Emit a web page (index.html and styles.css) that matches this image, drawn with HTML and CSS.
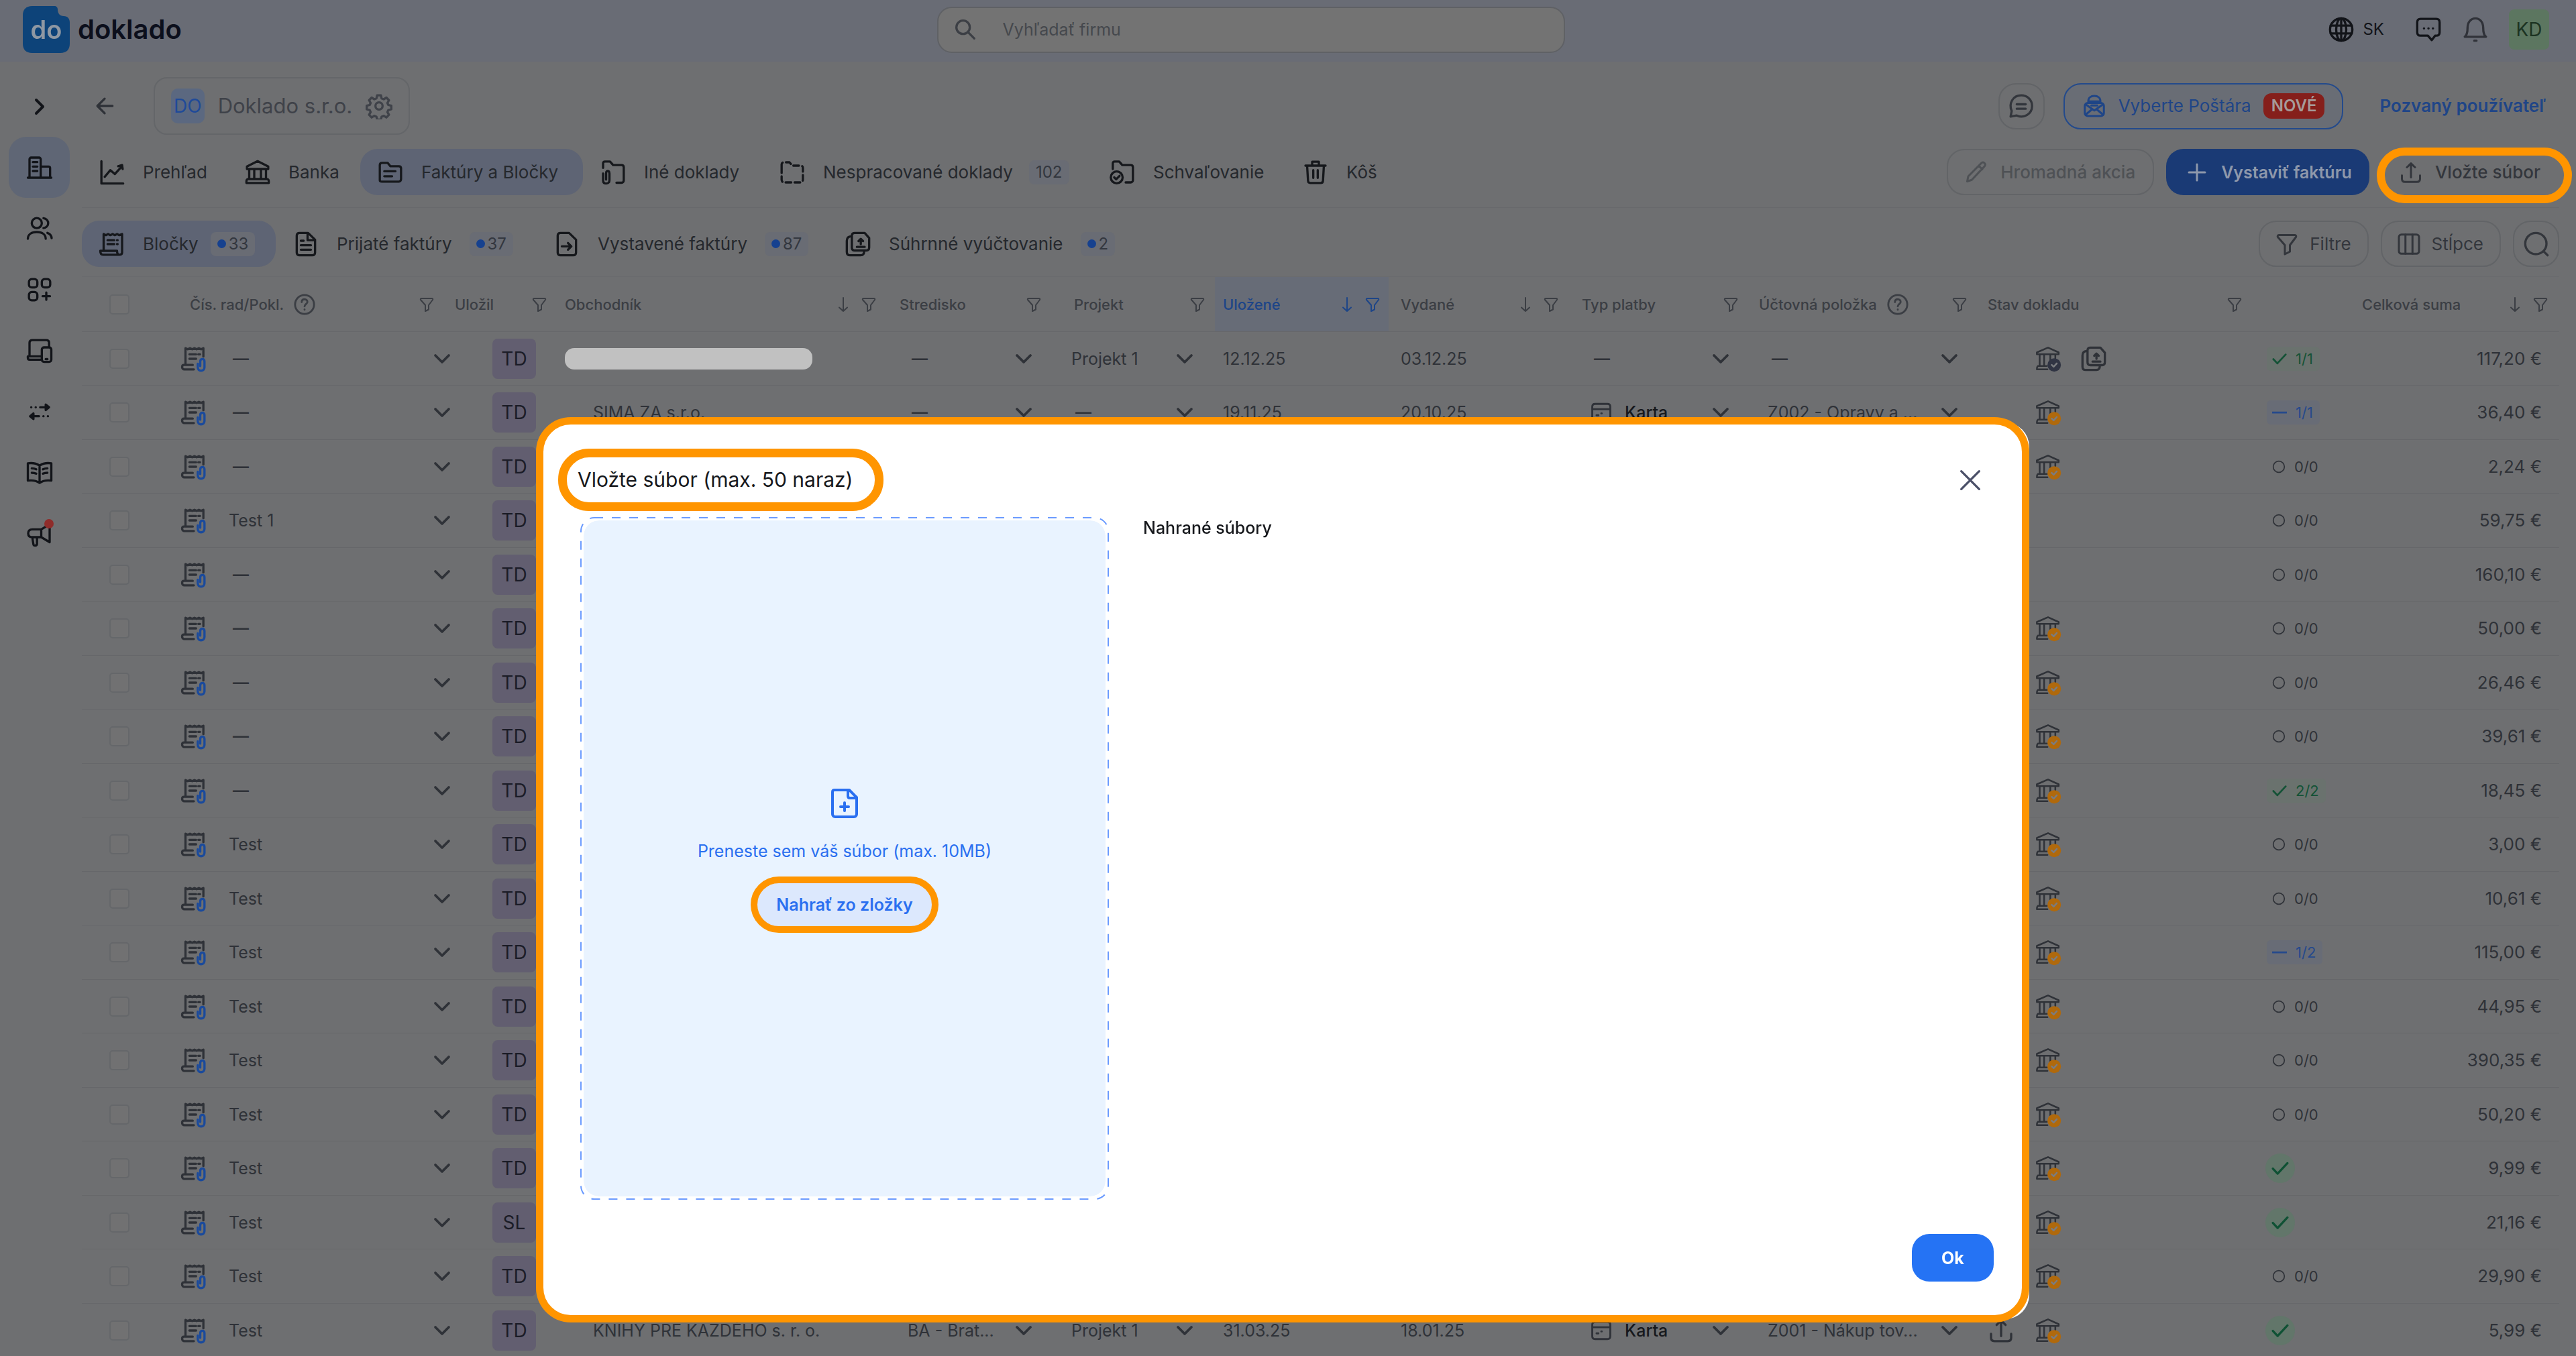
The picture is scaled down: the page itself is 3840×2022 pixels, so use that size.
FILE: index.html
```
<!DOCTYPE html>
<html lang="sk">

<head>
    <meta charset="utf-8">
    <title>Doklado - Bločky</title>
    <link rel="stylesheet" href="styles.css">
</head>

<body>
    <!-- icons -->
    <svg class="sprite" aria-hidden="true">
        <symbol id="chev-r" viewBox="0 0 24 24"><path d="M9.500 7l5 5-5 5"/></symbol>
        <symbol id="chev-d" viewBox="0 0 24 24"><path d="M4 8l8 8 8-8"/></symbol>
        <symbol id="back" viewBox="0 0 24 24"><path d="M19 12H6M12 5.500L5.500 12l6.500 6.500"/></symbol>
        <symbol id="gear" viewBox="0 0 24 24"><circle cx="12" cy="12" r="3.200"/><path d="M10.300 2.500h3.400l.6 2.700 1.900.8 2.400-1.500 2.300 2.400-1.400 2.400.8 1.800 2.700.7v3.200l-2.700.7-.8 1.800 1.400 2.400-2.300 2.400-2.400-1.500-1.900.8-.6 2.700h-3.400l-.6-2.700-1.900-.8-2.400 1.500-2.300-2.400 1.400-2.400-.8-1.800-2.700-.7v-3.200l2.700-.7.8-1.800-1.400-2.400 2.300-2.400 2.400 1.500 1.900-.8z"/></symbol>
        <symbol id="building" viewBox="0 0 24 24"><path d="M1.500 21h21M3 21V4.500C3 3.700 3.600 3 4.400 3h7.200c.8 0 1.400.7 1.400 1.500V21M13 11h7c.8 0 1.400.6 1.400 1.400V21M6 7h4M6 11h4M6 15h4"/></symbol>
        <symbol id="users" viewBox="0 0 24 24"><circle cx="9.500" cy="7" r="4.500"/><path d="M15.500 2.600c2.500.4 4.200 2.200 4.200 4.500s-1.700 4-4.200 4.400M1.500 21c0-4 3.500-6 8-6s8 2 8 6M19 15.800c2.300.8 3.700 2.500 3.800 4.700"/></symbol>
        <symbol id="apps" viewBox="0 0 24 24"><rect x="2.500" y="2.500" width="7.500" height="7.500" rx="2.500"/><rect x="14" y="2.500" width="7.500" height="7.500" rx="2.500"/><rect x="2.500" y="14" width="7.500" height="7.500" rx="2.500"/><path d="M18 14.500v6.500M14.700 17.800h6.600"/></symbol>
        <symbol id="devices" viewBox="0 0 24 24"><path d="M14 20H3c-1 0-1.500-.6-1.500-1.500V17H14M3 17V5c0-1.500.9-2.500 2.500-2.500h12.500c1.500 0 2.500 1 2.500 2.500v3"/><rect x="14" y="9" width="8.500" height="13" rx="2"/><path d="M17.500 19.500h1.500"/></symbol>
        <symbol id="swap" viewBox="0 0 24 24"><path d="M4.500 8h.1M8.500 8h.1M12.500 8h7M17.500 5.500L20.500 8l-3 2.500zM19.500 16h-.1M15.500 16h-.1M11.500 16h-7M6.500 13.500L3.500 16l3 2.500z"/></symbol>
        <symbol id="book" viewBox="0 0 24 24"><path d="M12 5.500C9 3.500 5 3 1.500 3.500v15.500c3.500-.5 7.500 0 10.500 2 3-2 7-2.500 10.500-2V3.500C19 3 15 3.500 12 5.500zM12 5.500V21M5 8c1.500 0 3 .3 4 .8M5 12c1.500 0 3 .3 4 .8M19 8c-1.500 0-3 .3-4 .8M19 12c-1.500 0-3 .3-4 .8"/></symbol>
        <symbol id="mega" viewBox="0 0 24 24"><path d="M13.500 8H5.500C3 8 1.800 9.500 1.800 11.500S3 15 5.500 15h8l7.500 4.500v-16zM13.500 8v7M5.500 15.500l1 6c.2.800.8 1 1.500 1 1.200 0 1.700-.6 1.700-1.500v-5.500"/></symbol>
        <symbol id="chart" viewBox="0 0 24 24"><path d="M2.500 2v20H22M5.500 16l5-6 4 3.500 6-6.500M17.500 6.500l3.500-1 .5 3.500"/></symbol>
        <symbol id="bank" viewBox="0 0 24 24"><path d="M2.500 9V6.800L12 2l9.500 4.800V9zM4.500 9v9M9 9v9M15 9v9M19.500 9v9M3.500 18h17M2 21.500h20V20c0-1-.6-2-1.500-2h-17C2.600 18 2 19 2 20z"/></symbol>
        <symbol id="folder" viewBox="0 0 24 24"><path d="M2.500 19V5.500C2.500 4.100 3.400 3.500 4.500 3.500h5L12 6.500h7.500c1.200 0 2 .8 2 2V18c0 1.300-.8 2.300-2 2.300h-15c-1.200 0-2-.5-2-1.300zM6.500 11h10M6.500 15.500h7"/></symbol>
        <symbol id="folder-clip" viewBox="0 0 24 24"><path d="M3 8V4c0-1 .6-1.700 1.700-1.700h4.500L12 5.500h7.500c1.200 0 2 .8 2 2V19c0 1.300-.8 2.300-2 2.300H15M3 13v6c0 2 1.200 3 2.800 3s2.900-1 2.900-3v-6c0-1.500-.8-2.200-1.700-2.200S5.700 11.500 5.700 13v5.500"/></symbol>
        <symbol id="folder-dash" viewBox="0 0 24 24"><path stroke-dasharray="5 3" d="M2.500 8V5c0-1.400.9-2 2-2h5L12 6h7.500c1.200 0 2 .8 2 2v10.500c0 1.300-.8 2.500-2 2.500h-15c-1.200 0-2-1.200-2-2.500z"/></symbol>
        <symbol id="folder-check" viewBox="0 0 24 24"><circle cx="7" cy="16.500" r="5.300"/><path d="M4.800 16.500l1.700 1.700 3-3M3.500 9V4c0-1 .6-1.700 1.700-1.700h4L12 5.500h7.500c1.200 0 2 .8 2 2V19c0 1-.8 2-2 2H15"/></symbol>
        <symbol id="trash" viewBox="0 0 24 24"><path d="M3 6h18M9 5.500V2.500h6v3M4.500 6l.8 13.500c.1 1.300.8 2 2 2h9.400c1.200 0 1.900-.7 2-2L19.500 6M10 10v7M14 10v7"/></symbol>
        <symbol id="receipt" viewBox="0 0 24 24"><path d="M4.500 18V3l2 1 2-1 2 1 2-1 2 1 2-1 2 1 2.500-1v16.500c0 1.300-1 2-2.500 2H4c-1.500 0-2.500-1-2.500-3.500h15c0 2.500.6 3.500 2 3.500M8 8.500h6M16.500 8.500h.5M8 12h6M16.500 12h.5"/></symbol>
        <symbol id="receipt-clip" viewBox="0 0 24 24"><path d="M4.500 17V2.500l2 1 2-1 2 1 2-1 2 1 2-1 2 1 2-1V10M8 8h6M16 8h1.500M8 12h6M11 17.500H3c-1 0-1.500 1-1.500 2s.8 2 2 2H12"/><path class="clip" d="M15.500 16.500v3.200c0 1.900 1.200 3 2.900 3s3.100-1.100 3.100-3V14.500c0-1.500-.8-2.300-1.900-2.300s-1.900.8-1.900 2.300v4"/></symbol>
        <symbol id="doc" viewBox="0 0 24 24"><path d="M3.800 4.500c0-1.500 1-2.500 2.500-2.500H14l6.200 6v11.500c0 1.500-1 2.500-2.500 2.500H6.300c-1.500 0-2.500-1-2.500-2.500zM13.500 2.500V8.500H20M7.500 9h2.500M7.500 13h9M7.500 17h9"/></symbol>
        <symbol id="doc-arrow" viewBox="0 0 24 24"><path d="M3.800 4.500c0-1.500 1-2.500 2.500-2.500H14l6.200 6v11.500c0 1.500-1 2.500-2.500 2.500H6.300c-1.500 0-2.500-1-2.500-2.500zM7.500 14h8M13 11l3 3-3 3"/></symbol>
        <symbol id="docs" viewBox="0 0 24 24"><path d="M6.500 4.500C6.500 3 7.500 2 9 2h9l4 4.500V15c0 1.700-1 2.700-2.500 2.700H9c-1.500 0-2.500-1-2.500-2.700zM6.500 5C3.500 5 2 6.500 2 9v10c0 2 1 3 3 3h9.500c2 0 3-1 3-3.500M11 14.500h7M14.500 12V7.500M12.500 9.300l2-2 2 2"/></symbol>
        <symbol id="pencil" viewBox="0 0 24 24"><path d="M3 21l1-5L17 2.800c1-1 2.300-.9 3.200 0s1 2.200 0 3.200L7.500 19.500zM14.500 5.500l3.500 3.500"/></symbol>
        <symbol id="plus" viewBox="0 0 24 24"><path d="M12 4v16M4 12h16"/></symbol>
        <symbol id="upload" viewBox="0 0 24 24"><path d="M12 17V3M8 7l4-4 4 4M3 15v3.500C3 20.400 4 21.500 6 21.500h12c2 0 3-1.100 3-3V15"/></symbol>
        <symbol id="search" viewBox="0 0 24 24"><circle cx="10" cy="10" r="6"/><path d="M14.500 14.500l5.500 5.500"/></symbol>
        <symbol id="search2" viewBox="0 0 24 24"><circle cx="11.500" cy="11.500" r="9.500"/><path d="M18.500 18.500L22 22"/></symbol>
        <symbol id="globe" viewBox="0 0 24 24"><circle cx="12" cy="12" r="10"/><ellipse cx="12" cy="12" rx="4.500" ry="10"/><path d="M2.500 8.500h19M2.500 15.500h19M12 2v20"/></symbol>
        <symbol id="chat" viewBox="0 0 24 24"><path d="M5 2.500h14c1.700 0 3 1 3 3v9c0 2-1.300 3-3 3h-1l-3 4-3.500-4H5c-1.700 0-3-1-3-3v-9c0-2 1.300-3 3-3zM8 11h.1M12 11h.1M16 11h.1"/></symbol>
        <symbol id="bell" viewBox="0 0 24 24"><path d="M2.500 18.500c2-1.500 2.500-4 2.500-8C5 5.500 8 2 12 2s7 3.500 7 8.500c0 4 .5 6.500 2.500 8zM11 22h2"/></symbol>
        <symbol id="comment" viewBox="0 0 24 24"><path d="M2.500 21.500l1-5C.5 10 4.500 2.500 12 2.500c5.500 0 9.700 4.200 9.700 9.500 0 7-7.200 11.500-13.700 8.500zM8 10.500h8M8 14.500h8"/></symbol>
        <symbol id="postman" viewBox="0 0 24 24"><rect x="2.500" y="9" width="19" height="13" rx="3"/><path d="M3.500 10.500l8.500 6 8.500-6M3.500 20.500l6-5M20.500 20.500l-6-5M6 9V7c0-3 2.500-5 6-5s6 2 6 5v2M6 7.500h12M9 11.500h6"/></symbol>
        <symbol id="funnel" viewBox="0 0 24 24"><path d="M4 3h16c1 0 1.500 1 1 2l-6 8v6.500l-5 2.500V13L3 5c-.5-1 0-2 1-2z"/></symbol>
        <symbol id="columns" viewBox="0 0 24 24"><rect x="2" y="2.500" width="20" height="19" rx="2.500"/><path d="M8.500 2.500v19M15.500 2.500v19"/></symbol>
        <symbol id="help" viewBox="0 0 24 24"><circle cx="12" cy="12" r="10"/><path d="M9 9.500c0-2 1.300-3 3-3s3 1.200 3 2.800c0 2.200-3 2.400-3 4.700M12 17.300v.2"/></symbol>
        <symbol id="arrow-d" viewBox="0 0 24 24"><path d="M12 2v20M6 16.500l6 5.500 6-5.500"/></symbol>
        <symbol id="bank-state" viewBox="0 0 24 24"><path d="M2 8V6.300L12 2l9.500 4.300V8zM4.500 8.500v10M8.500 8.500v10M14 8.500v5M18.500 8.500v3M3 18.500h8M2 21.500h9.500M2 21.500c0-1.500.3-3 1.500-3"/><circle class="bubble" cx="17.500" cy="17.500" r="6"/><path class="tick" d="M15.300 17.500l1.700 1.600 2.800-3"/></symbol>
        <symbol id="card" viewBox="0 0 24 24"><path d="M2.500 6c0-2 1-3 3-3h13c2 0 3 1 3 3v12c0 2-1 3-3 3h-13c-2 0-3-1-3-3zM2.500 8.500h19M7 15h2M12 13h.5"/></symbol>
        <symbol id="check" viewBox="0 0 24 24"><path d="M2 12.500l6.500 7L22 5"/></symbol>
        <symbol id="minus" viewBox="0 0 24 24"><path d="M1 12h22"/></symbol>
        <symbol id="ring" viewBox="0 0 24 24"><circle cx="12" cy="12" r="10"/></symbol>
        <symbol id="close" viewBox="0 0 24 24"><path d="M4 4l16 16M20 4L4 20"/></symbol>
        <symbol id="file-plus" viewBox="0 0 24 24"><path d="M4.500 2h11l5.500 5.500V20c0 1.200-.8 2-2 2H5c-1.200 0-2-.8-2-2V3.500C3 2.600 3.600 2 4.500 2zM14.500 2v4.500c0 1 .6 1.500 1.500 1.500h5M12 11.500v6M9 14.500h6"/></symbol>
    </svg>

    <header class="topbar">
        <a href="#" class="logo">
            <span class="mark"><svg viewBox="0 0 70 70"><path d="M14 0h33c3 0 5 2 5 5 0 6 3 10 9 10 6 0 9 4 9 10v31c0 9-5 14-14 14H14C5 70 0 65 0 56V14C0 5 5 0 14 0z"/></svg><b>do</b></span>
            <span class="name">doklado</span>
        </a>
        <label class="search">
            <svg class="ico"><use href="#search"/></svg>
            <input type="text" placeholder="Vyhľadať firmu" aria-label="Vyhľadať firmu">
        </label>
        <div class="user">
            <button class="lang"><svg class="ico"><use href="#globe"/></svg>SK</button>
            <button aria-label="Správy"><svg class="ico"><use href="#chat"/></svg></button>
            <button aria-label="Upozornenia"><svg class="ico thin"><use href="#bell"/></svg></button>
            <button class="avatar">KD</button>
        </div>
    </header>

    <div class="layout">
        <nav class="sidebar">
            <button aria-label="Rozbaliť"><svg class="ico big"><use href="#chev-r"/></svg></button>
            <button aria-label="Firmy" class="active"><svg class="ico"><use href="#building"/></svg></button>
            <button aria-label="Používatelia"><svg class="ico"><use href="#users"/></svg></button>
            <button aria-label="Aplikácie"><svg class="ico"><use href="#apps"/></svg></button>
            <button aria-label="Zariadenia"><svg class="ico"><use href="#devices"/></svg></button>
            <button aria-label="Prevody"><svg class="ico"><use href="#swap"/></svg></button>
            <button aria-label="Návody"><svg class="ico"><use href="#book"/></svg></button>
            <button aria-label="Novinky" class="news"><svg class="ico"><use href="#mega"/></svg></button>
        </nav>

        <main>
            <div class="head">
                <button class="plain" aria-label="Späť"><svg class="ico"><use href="#back"/></svg></button>
                <button class="company"><span class="tag">DO</span>Doklado s.r.o.<svg class="ico"><use href="#gear"/></svg></button>
                <div class="right">
                    <button class="btn round" aria-label="Komentáre"><svg class="ico"><use href="#comment"/></svg></button>
                    <button class="btn postman"><svg class="ico"><use href="#postman"/></svg>Vyberte Poštára<span class="new">NOVÉ</span></button>
                    <a href="#" class="invited">Pozvaný používateľ</a>
                </div>
            </div>

            <div class="bar main-bar">
                <nav class="tabs">
                    <a href="#"><svg class="ico"><use href="#chart"/></svg>Prehľad</a>
                    <a href="#"><svg class="ico"><use href="#bank"/></svg>Banka</a>
                    <a href="#" class="active"><svg class="ico"><use href="#folder"/></svg>Faktúry a Bločky</a>
                    <a href="#"><svg class="ico"><use href="#folder-clip"/></svg>Iné doklady</a>
                    <a href="#"><svg class="ico"><use href="#folder-dash"/></svg>Nespracované doklady<i class="count">102</i></a>
                    <a href="#"><svg class="ico"><use href="#folder-check"/></svg>Schvaľovanie</a>
                    <a href="#"><svg class="ico"><use href="#trash"/></svg>Kôš</a>
                </nav>
                <div class="right">
                    <button class="btn" disabled><svg class="ico"><use href="#pencil"/></svg>Hromadná akcia</button>
                    <button class="btn primary"><svg class="ico"><use href="#plus"/></svg>Vystaviť faktúru</button>
                    <button class="btn insert"><svg class="ico"><use href="#upload"/></svg>Vložte súbor</button>
                </div>
            </div>

            <div class="bar">
                <nav class="tabs sub">
                    <a href="#" class="active"><svg class="ico"><use href="#receipt"/></svg>Bločky<i class="count dot">33</i></a>
                    <a href="#"><svg class="ico"><use href="#doc"/></svg>Prijaté faktúry<i class="count dot">37</i></a>
                    <a href="#"><svg class="ico"><use href="#doc-arrow"/></svg>Vystavené faktúry<i class="count dot">87</i></a>
                    <a href="#"><svg class="ico"><use href="#docs"/></svg>Súhrnné vyúčtovanie<i class="count dot">2</i></a>
                </nav>
                <div class="right">
                    <button class="btn"><svg class="ico"><use href="#funnel"/></svg>Filtre</button>
                    <button class="btn"><svg class="ico"><use href="#columns"/></svg>Stĺpce</button>
                    <button class="btn round" aria-label="Hľadať"><svg class="ico"><use href="#search2"/></svg></button>
                </div>
            </div>

            <table>
                <colgroup>
                    <col class="c-check"><col class="c-num"><col class="c-by"><col class="c-shop"><col class="c-center"><col class="c-project"><col class="c-saved"><col class="c-issued"><col class="c-pay"><col class="c-acc"><col class="c-state"><col class="c-appr"><col class="c-sum">
                </colgroup>
                <thead>
                    <tr>
                        <th><input type="checkbox" aria-label="Označiť všetko"></th>
                        <th class="t-num"><div>Čís. rad/Pokl.<svg class="q"><use href="#help"/></svg><span></span><svg><use href="#funnel"/></svg></div></th>
                        <th class="t-by"><div>Uložil<span></span><svg><use href="#funnel"/></svg></div></th>
                        <th class="t-wide"><div>Obchodník<span></span><svg><use href="#arrow-d"/></svg><svg><use href="#funnel"/></svg></div></th>
                        <th><div>Stredisko<span></span><svg><use href="#funnel"/></svg></div></th>
                        <th class="t-project"><div>Projekt<span></span><svg><use href="#funnel"/></svg></div></th>
                        <th class="sorted"><div>Uložené<span></span><svg><use href="#arrow-d"/></svg><svg><use href="#funnel"/></svg></div></th>
                        <th class="t-wide"><div>Vydané<span></span><svg><use href="#arrow-d"/></svg><svg><use href="#funnel"/></svg></div></th>
                        <th><div>Typ platby<span></span><svg><use href="#funnel"/></svg></div></th>
                        <th><div>Účtovná položka<svg class="q"><use href="#help"/></svg><span></span><svg><use href="#funnel"/></svg></div></th>
                        <th class="t-state"><div>Stav dokladu<span></span><svg><use href="#funnel"/></svg></div></th>
                        <th></th>
                        <th class="t-sum"><div>Celková suma<span></span><svg><use href="#arrow-d"/></svg><svg><use href="#funnel"/></svg></div></th>
                    </tr>
                </thead>
                <tbody id="rows"></tbody>
            </table>
        </main>
    </div>

    <div class="overlay">
        <section class="modal" role="dialog" aria-labelledby="modal-title">
            <div class="modal-head">
                <h2 id="modal-title">Vložte súbor (max. 50 naraz)</h2>
                <button aria-label="Zavrieť"><svg class="ico"><use href="#close"/></svg></button>
            </div>
            <div class="modal-body">
                <div class="drop">
                    <svg class="dash" aria-hidden="true"><rect x="1" y="1" rx="20"/></svg>
                    <svg class="file"><use href="#file-plus"/></svg>
                    <p>Preneste sem váš súbor (max. 10MB)</p>
                    <button>Nahrať zo zložky</button>
                </div>
                <h3>Nahrané súbory</h3>
            </div>
            <div class="modal-foot"><button>Ok</button></div>
        </section>
    </div>

    <script>
    // number, uploader, shop, center, project, saved, issued, payment, account, state icons, approval, sum
    var D = "—";
    var data = [
        [D, "TD", "#", D, "Projekt 1", "12.12.25", "03.12.25", D, D, "done docs", "ok 1/1", "117,20 €"],
        [D, "TD", "SIMA ZA s.r.o.", D, D, "19.11.25", "20.10.25", "Karta", "Z002 - Opravy a ...", "wait", "part 1/1", "36,40 €"],
        [D, "TD", "", "", "", "", "", "", "", "wait", "none 0/0", "2,24 €"],
        ["Test 1", "TD", "", "", "", "", "", "", "", "", "none 0/0", "59,75 €"],
        [D, "TD", "", "", "", "", "", "", "", "", "none 0/0", "160,10 €"],
        [D, "TD", "", "", "", "", "", "", "", "wait", "none 0/0", "50,00 €"],
        [D, "TD", "", "", "", "", "", "", "", "wait", "none 0/0", "26,46 €"],
        [D, "TD", "", "", "", "", "", "", "", "wait", "none 0/0", "39,61 €"],
        [D, "TD", "", "", "", "", "", "", "", "wait", "ok 2/2", "18,45 €"],
        ["Test", "TD", "", "", "", "", "", "", "", "wait", "none 0/0", "3,00 €"],
        ["Test", "TD", "", "", "", "", "", "", "", "wait", "none 0/0", "10,61 €"],
        ["Test", "TD", "", "", "", "", "", "", "", "wait", "part 1/2", "115,00 €"],
        ["Test", "TD", "", "", "", "", "", "", "", "wait", "none 0/0", "44,95 €"],
        ["Test", "TD", "", "", "", "", "", "", "", "wait", "none 0/0", "390,35 €"],
        ["Test", "TD", "", "", "", "", "", "", "", "wait", "none 0/0", "50,20 €"],
        ["Test", "TD", "", "", "", "", "", "", "", "wait", "full", "9,99 €"],
        ["Test", "SL", "", "", "", "", "", "", "", "wait", "full", "21,16 €"],
        ["Test", "TD", "", "", "", "", "", "", "", "wait", "none 0/0", "29,90 €"],
        ["Test", "TD", "KNIHY PRE KAŽDÉHO s. r. o.", "BA - Brat...", "Projekt 1", "31.03.25", "18.01.25", "Karta", "Z001 - Nákup tov...", "up wait", "full", "5,99 €"]
    ];
    var marks = { ok: "check", part: "minus", none: "ring", full: "check" };

    function svg(id, cls) {
        return '<svg class="' + (cls || "") + '"><use href="#' + id + '"/></svg>';
    }

    // cell with a value and a drop-down arrow
    function pick(text, before) {
        if (!text) return "<td></td>";
        var cls = text == D ? "val empty" : "val";
        return '<td><div class="pick">' + (before || "") + '<span class="' + cls + '">' + text + "</span>" + svg("chev-d", "chev") + "</div></td>";
    }

    function shop(text) {
        return text == "#" ? '<span class="hidden-name"></span>' : '<span class="shop">' + text + "</span>";
    }

    function state(text) {
        return '<div class="state">' +
            "<span>" + (/up/.test(text) ? svg("upload") : "") + "</span>" +
            "<span>" + (/wait/.test(text) ? svg("bank-state", "wait") : /done/.test(text) ? svg("bank-state", "done") : "") + "</span>" +
            "<span>" + (/docs/.test(text) ? svg("docs") : "") + "</span></div>";
    }

    var Tmp = [];
    for (var i = 0; i < data.length; i++) {
        var r = data[i];
        var a = r[10].split(" ");
        Tmp.push('<tr><td><input type="checkbox" aria-label="Označiť riadok ' + (i + 1) + '"></td>' +
            pick(r[0], svg("receipt-clip", "rc")) +
            '<td><span class="who">' + r[1] + "</span></td>" +
            "<td>" + shop(r[2]) + "</td>" +
            pick(r[3]) + pick(r[4]) +
            "<td>" + r[5] + "</td><td>" + r[6] + "</td>" +
            pick(r[7], r[7] == "Karta" ? svg("card", "card") : "") + pick(r[8]) +
            "<td>" + state(r[9]) + "</td>" +
            '<td><span class="appr ' + a[0] + '">' + svg(marks[a[0]]) + (a[1] || "") + "</span></td>" +
            '<td class="sum">' + r[11] + "</td></tr>");
    }
    document.querySelector("#rows").innerHTML = Tmp.join("");
    </script>
</body>

</html>
```
FILE: styles.css
```
/* reset */

* {
    box-sizing: border-box;
}

body,
h2,
h3,
p {
    margin: 0;
    padding: 0;
}

body {
    background: #6e6f71;
    color: #2f3238;
    font: 24px/32px Inter, "Open Sans", sans-serif;
    overflow: hidden;
}

a {
    color: inherit;
    text-decoration: none;
}

button {
    border: 0;
    padding: 0;
    background: none;
    color: inherit;
    font: inherit;
    cursor: pointer;
}

svg {
    fill: none;
    stroke: currentColor;
    stroke-width: 2;
    stroke-linecap: round;
    stroke-linejoin: round;
    flex: none;
}

.sprite {
    position: absolute;
    width: 0;
    height: 0;
}

.ico {
    display: block;
    width: 40px;
    height: 40px;
}

/* top bar */

.topbar {
    display: grid;
    grid-template-columns: 13fr minmax(300px, 936px) 14fr;
    align-items: center;
    height: 92px;
    padding: 0 40px 4px 34px;
    background: #696c75;
}

.logo {
    display: flex;
    align-items: center;
    gap: 12px;
}

.logo .mark {
    display: grid;
    place-items: center;
    width: 70px;
    height: 70px;
}

.logo .mark svg,
.logo .mark b {
    grid-area: 1 / 1;
}

.logo .mark svg {
    width: 70px;
    height: 70px;
    fill: #0d4379;
    stroke: none;
}

.logo .mark b {
    z-index: 1;
    color: #8f98a3;
    font-size: 38px;
    font-weight: 600;
}

.logo .name {
    color: #0c0f1c;
    font-size: 40px;
    font-weight: 600;
}

.search {
    display: flex;
    align-items: center;
    gap: 34px;
    height: 69px;
    padding: 0 20px;
    border: 2px solid #5f6165;
    border-radius: 22px;
    background: #737373;
    color: #3c3f45;
}

.search input {
    flex: 1;
    border: 0;
    background: none;
    font: inherit;
    font-size: 25px;
    outline: 0;
}

.search input::placeholder {
    color: #45484d;
}

.user {
    display: flex;
    justify-content: flex-end;
    align-items: center;
    gap: 30px;
    color: #121419;
}

.lang {
    display: flex;
    align-items: center;
    gap: 12px;
    margin-right: 16px;
}

.user .thin {
    color: #303239;
}

.avatar {
    width: 60px;
    height: 60px;
    border-radius: 8px;
    background: #5c7660;
    color: #1c3322;
    font-size: 28px;
}

/* sidebar and page */

.layout {
    display: grid;
    grid-template-columns: 116px 1fr;
}

.sidebar {
    padding: 21px 12px 0 13px;
    color: #121419;
}

.sidebar button {
    display: grid;
    place-items: center;
    width: 91px;
    height: 91px;
    border-radius: 26px;
}

.sidebar .big {
    width: 48px;
    height: 48px;
}

.sidebar .active {
    background: #5f6675;
}

.news {
    position: relative;
}

.news::after {
    content: "";
    position: absolute;
    top: 24px;
    right: 24px;
    width: 14px;
    height: 14px;
    border-radius: 50%;
    background: #8f2c2a;
}

main {
    min-width: 0;
    padding: 23px 25px 0 6px;
}

.head {
    display: flex;
    align-items: center;
    height: 86px;
    margin-bottom: 21px;
}

.head .plain {
    margin: 0 53px 0 14px;
}

.company {
    display: flex;
    align-items: center;
    gap: 20px;
    height: 86px;
    padding: 0 24px;
    border: 2px solid #646669;
    border-radius: 20px;
    color: #3f4249;
    font-size: 31px;
}

.company .tag {
    padding: 10px 4px;
    border-radius: 10px;
    background: #5b6880;
    color: #1f4a99;
    font-size: 28px;
}

.right {
    display: flex;
    align-items: center;
    gap: 18px;
    margin-left: auto;
}

.btn {
    position: relative;
    display: flex;
    align-items: center;
    gap: 16px;
    height: 69px;
    padding: 0 24px 0 22px;
    border: 2px solid #626467;
    border-radius: 26px;
    color: #33363c;
    font-size: 26px;
    white-space: nowrap;
}

.btn .ico {
    width: 36px;
    height: 36px;
}

.btn.round {
    justify-content: center;
    width: 69px;
    padding: 0;
}

.btn.round .ico {
    width: 40px;
    height: 40px;
}

.btn:disabled {
    color: #4e5155;
}

.main-bar .btn {
    gap: 18px;
    padding: 0 26px 0 24px;
}

.btn:disabled,
.insert {
    font-weight: 500;
}

.main-bar .primary {
    padding: 0 26px 0 28px;
    border: 0;
    background: #1a3a75;
    color: #8e98ab;
    font-size: 25px;
    font-weight: 600;
}

.head .right {
    gap: 28px;
}

.btn.postman {
    gap: 18px;
    padding: 0 26px;
    border-color: #234a8c;
    background: #696d75;
    color: #1f4587;
}

.new {
    padding: 3px 12px;
    border-radius: 12px;
    background: #851f1b;
    color: #a69a99;
    font-size: 24px;
    font-weight: 600;
}

.invited {
    padding: 18px 20px 18px 26px;
    color: #1f4587;
    font-weight: 600;
    font-size: 26px;
}

.main-bar .insert {
    border-color: transparent;
}

/* highlight around the insert button */

.insert::after {
    content: "";
    position: absolute;
    inset: -4px -21px -14px -9px;
    border: 12px solid #ff9500;
    border-radius: 44px;
}

.bar {
    display: flex;
    align-items: center;
    padding-top: 19px;
}

.main-bar {
    padding: 0 0 18px;
    border-bottom: 1px solid #68696c;
}

.tabs {
    display: grid;
    grid-template-columns: 217px 198px 332px 267px 492px 288px 163px;
}

.tabs.sub {
    grid-template-columns: 289px 389px 434px 445px;
}

.tabs a {
    display: flex;
    align-items: center;
    gap: 26px;
    height: 69px;
    padding-left: 25px;
    border-radius: 26px;
    color: #25282d;
    font-size: 26px;
    white-space: nowrap;
}

.tabs .ico {
    color: #16181c;
}

.tabs .active {
    background: #5e6474;
}

.count {
    display: flex;
    align-items: center;
    gap: 4px;
    height: 36px;
    margin-left: -2px;
    padding: 0 10px;
    border-radius: 8px;
    background: #696c74;
    color: #33373f;
    font-size: 24px;
    font-style: normal;
}

.sub .count {
    margin-left: -8px;
}

.sub .active + a .count,
.sub .active ~ a .count {
    margin-left: 0;
}

.count.dot::before {
    content: "";
    width: 13px;
    height: 13px;
    border-radius: 50%;
    background: #16418f;
}

/* table */

table {
    width: 100%;
    margin-top: 14px;
    border-top: 1px solid #6a6b6e;
    border-collapse: collapse;
    table-layout: fixed;
}

.c-check { width: 135px; }
.c-num { width: 415px; }
.c-by { width: 158px; }
.c-shop { width: 499px; }
.c-center { width: 242px; }
.c-project { width: 240px; }
.c-saved { width: 259px; }
.c-issued { width: 276px; }
.c-pay { width: 264px; }
.c-acc { width: 341px; }
.c-state { width: 406px; }
.c-appr { width: 152px; }
.c-sum { width: 306px; }

th {
    height: 82px;
    padding: 0 18px 0 12px;
    color: #3b3e44;
    font-size: 22px;
    font-weight: 500;
    text-align: left;
}

th:first-child,
td:first-child {
    padding-left: 41px;
}

th div {
    display: flex;
    align-items: center;
    gap: 14px;
    white-space: nowrap;
}

th span {
    flex: 1;
    margin-left: -14px;
}

th svg {
    width: 24px;
    height: 24px;
}

th .q {
    width: 34px;
    height: 34px;
}

.t-num { padding: 0 24px 0 26px; }
.t-by { padding: 0 14px 0 6px; }
.t-wide { padding-right: 22px; }
.t-project { padding: 0 14px 0 30px; }
.t-state { padding-right: 14px; }
.t-sum { padding-right: 16px; }

th.sorted {
    padding-right: 12px;
    background: #676c77;
    color: #1d4588;
}

th.sorted + th {
    padding-left: 18px;
}

td {
    height: 80px;
    padding: 0 12px;
    border-top: 1px solid #66676a;
    font-size: 25px;
    white-space: nowrap;
}

tr:nth-child(even) td {
    height: 81px;
}

td:nth-child(2) {
    padding-right: 0;
}

td:nth-child(6) {
    padding-left: 26px;
}

td:nth-child(8) {
    padding-left: 18px;
}

td:nth-child(10) {
    padding-left: 25px;
}

input[type="checkbox"] {
    display: block;
    appearance: none;
    width: 30px;
    height: 30px;
    margin: 0;
    border: 2px solid #65676a;
    border-radius: 5px;
    background: #717172;
}

.pick {
    display: flex;
    align-items: center;
    padding-right: 20px;
}

td:nth-child(2) .pick {
    padding-right: 0;
}

.pick .val {
    flex: 1;
}

.pick .empty {
    padding-left: 6px;
    font-size: 24px;
    font-weight: 600;
}

td:nth-child(5) .val {
    padding-left: 12px;
}

td:nth-child(5) .empty,
td:nth-child(9) .empty {
    padding-left: 18px;
}

.pick .chev {
    width: 30px;
    height: 30px;
    margin-right: -2px;
    stroke-width: 3;
}

.pick .rc {
    width: 40px;
    height: 40px;
    margin-right: 32px;
}

.clip {
    stroke: #1a4a9c;
}

.pick .card {
    width: 34px;
    height: 34px;
    margin: 0 18px 0 12px;
}

.card + .val {
    color: #16181c;
    font-weight: 500;
}

.who {
    display: block;
    width: 65px;
    margin-left: 50px;
    border-radius: 8px;
    background: #625e70;
    color: #1b1c27;
    font-size: 28px;
    line-height: 60px;
    text-align: center;
}

.shop {
    padding-left: 42px;
}

.hidden-name {
    display: block;
    width: 369px;
    height: 32px;
    border-radius: 14px;
    background: #c1c1c1;
}

.state {
    display: grid;
    grid-template-columns: 70px 68px 68px;
}

.state span {
    height: 40px;
}

.state svg {
    width: 40px;
    height: 40px;
}

/* small bubble on the bank icon */

.wait {
    --bubble: #b0690c;
    stroke-width: 1.5;
}

.done {
    --bubble: #303443;
    stroke-width: 1.5;
}

.bubble {
    fill: var(--bubble);
    stroke: none;
}

.tick {
    stroke: #7a7c80;
}

.appr {
    display: inline-flex;
    align-items: center;
    gap: 13px;
    height: 36px;
    margin-left: 10px;
    padding: 0 10px 0 8px;
    border-radius: 6px;
    font-size: 22px;
}

.appr svg {
    width: 22px;
    height: 22px;
    stroke-width: 3;
}

.appr.none svg {
    width: 20px;
    height: 20px;
    stroke-width: 2;
}

.appr.ok {
    background: #6a726e;
    color: #145236;
}

.appr.part {
    background: #686c76;
    color: #25498c;
}

.appr.full {
    justify-content: center;
    width: 44px;
    height: 44px;
    margin-left: 8px;
    padding: 0;
    border-radius: 50%;
    background: #62766a;
    color: #0f5134;
}

.appr.full svg {
    width: 26px;
    height: 26px;
}

.sum {
    padding-right: 26px;
    font-size: 26px;
    text-align: right;
}

/* modal */

.overlay {
    position: fixed;
    inset: 0;
    display: flex;
    justify-content: center;
    align-items: flex-start;
    padding: 630px 8px 0 0;
}

.modal {
    position: relative;
    width: 90%;
    max-width: 2218px;
    border-radius: 36px;
    background: #fff;
    color: #16181c;
}

/* highlight around the modal */

.modal::after {
    content: "";
    position: absolute;
    inset: -8px 0 -5px -8px;
    border: 11px solid #ff9500;
    border-radius: 52px;
    pointer-events: none;
}

.modal-head {
    display: flex;
    justify-content: space-between;
    align-items: center;
    padding: 39px 68px 9px 25px;
}

.modal-head h2 {
    padding: 0 32px 0 16px;
    border: 13px solid #ff9500;
    border-radius: 46px;
    font-size: 30px;
    font-weight: 400;
    line-height: 67px;
}

.modal-head button {
    color: #4b5068;
}

.modal-body {
    display: grid;
    grid-template-columns: 788px 1fr;
    gap: 51px;
    padding-left: 58px;
}

.modal-body h3 {
    font-size: 25px;
    font-weight: 500;
}

.drop {
    position: relative;
    display: flex;
    flex-direction: column;
    align-items: center;
    min-height: 1018px;
    padding-top: 398px;
    border: 5px solid #fff;
    border-radius: 28px;
    background: #e9f3ff;
    background-clip: padding-box;
    color: #2a6ff0;
    font-size: 25px;
}

.dash {
    position: absolute;
    top: -5px;
    left: -5px;
    width: calc(100% + 10px);
    height: calc(100% + 10px);
}

.dash rect {
    width: calc(100% - 2px);
    height: calc(100% - 2px);
    stroke: #6b9bff;
    stroke-dasharray: 13 13;
    stroke-linecap: butt;
}

.file {
    width: 48px;
    height: 48px;
}

.drop p {
    margin: 31px 0 22px;
}

.drop button {
    height: 84px;
    padding: 0 28px;
    border: 10px solid #ff9500;
    border-radius: 42px;
    background: #dce8fd;
    font-weight: 600;
}

.modal-foot {
    display: flex;
    justify-content: flex-end;
    padding: 51px 53px 56px;
}

.modal-foot button {
    width: 122px;
    height: 71px;
    border-radius: 26px;
    background: #2573f4;
    color: #fff;
    font-size: 25px;
    font-weight: 700;
}
```
